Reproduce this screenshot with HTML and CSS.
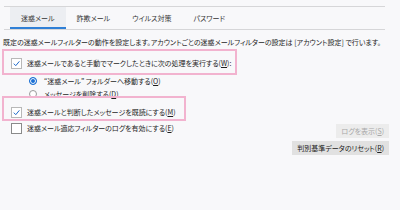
FILE: index.html
```html
<!DOCTYPE html>
<html lang="ja">

<head>
  <meta charset="UTF-8">
  <title>迷惑メール</title>
  <link rel="stylesheet" href="styles.css">
</head>

<body>
  <div class="panel">
    <div class="tabs">
      <div class="tab active">迷惑メール</div>
      <div class="tab">詐欺メール</div>
      <div class="tab">ウイルス対策</div>
      <div class="tab">パスワード</div>
    </div>

    <p class="desc">既定の迷惑メールフィルターの動作を設定します。アカウントごとの迷惑メールフィルターの設定は [アカウント設定] で行います。</p>

    <div class="row row-manual">
      <span class="check on"><svg viewBox="0 0 10 10"><path d="M2 5.2 L4.2 7.4 L8.2 2.6" /></svg></span>
      <span>迷惑メールであると手動でマークしたときに次の処理を実行する(<u>W</u>):</span>
    </div>
    <div class="row sub row-move">
      <span class="radio on"></span>
      <span>“迷惑メール” フォルダーへ移動する(<u>O</u>)</span>
    </div>
    <div class="row sub row-delete">
      <span class="radio"></span>
      <span>メッセージを削除する(<u>D</u>)</span>
    </div>
    <div class="row row-read">
      <span class="check on"><svg viewBox="0 0 10 10"><path d="M2 5.2 L4.2 7.4 L8.2 2.6" /></svg></span>
      <span>迷惑メールと判断したメッセージを既読にする(<u>M</u>)</span>
    </div>

    <div class="bottom">
      <div class="row">
        <span class="check"></span>
        <span>迷惑メール適応フィルターのログを有効にする(<u>E</u>)</span>
      </div>
      <div class="buttons">
        <button class="btn" disabled>ログを表示(<u>S</u>)</button>
        <button class="btn">判別基準データのリセット(<u>R</u>)</button>
      </div>
    </div>
  </div>

  <!-- 注釈の枠 -->
  <div class="mark mark-1"></div>
  <div class="mark mark-2"></div>
</body>

</html>
```

FILE: styles.css
```css
body {
  margin: 0;
  background: #f8f8fa;
  font-family: "Noto Sans CJK JP", "Noto Sans", sans-serif;
  font-size: 7px;
  font-feature-settings: "palt";
  color: #1e1e1e;
  position: relative;
  height: 210px;
  overflow: hidden;
}

.panel {
  padding: 6px 11px 0 3px;
}

.tabs {
  display: flex;
  height: 22px;
  margin: 0 4px 0 1px;
  padding-left: 6px;
  border-top: 1px solid #d6d6d8;
  border-bottom: 1px solid #d6d6d8;
}

.tab {
  padding: 0 11px;
  line-height: 22px;
  color: #333;
}

.tab.active {
  background: #eceef2;
  box-shadow: inset 0 -2px 0 #2f7fd6;
}

.desc {
  margin: 7px 0 0;
  line-height: 10px;
}

.row {
  display: flex;
  align-items: center;
  height: 12px;
  padding-left: 8px;
}

.row>span:last-child {
  margin-left: 5px;
}

.row-manual {
  margin-top: 10px;
}

.row-move {
  margin-top: 6px;
}

.row-delete {
  margin-top: 1px;
}

.row-read {
  margin-top: 6px;
}

.sub {
  padding-left: 26px;
}

.sub>span:last-child {
  margin-left: 7px;
}

.check {
  width: 9px;
  height: 9px;
  border: 1px solid #8a8a8a;
  background: #fff;
  display: flex;
}

.check.on {
  border-color: #b8b8b8;
}

.check svg {
  width: 9px;
  height: 9px;
}

.check path {
  fill: none;
  stroke: #1a67c9;
  stroke-width: 1.1;
}

.radio {
  width: 6px;
  height: 6px;
  border-radius: 50%;
  border: 1px solid #9a9a9a;
  background: #fff;
}

.radio.on {
  border-color: #1a6fd4;
  background: #1a6fd4;
  box-shadow: inset 0 0 0 1px #fff;
}

.bottom {
  display: flex;
  justify-content: space-between;
  align-items: flex-start;
  margin-top: 4px;
}

.buttons {
  display: flex;
  flex-direction: column;
  align-items: flex-end;
  gap: 3px;
  padding-top: 2px;
}

.btn {
  font: inherit;
  font-feature-settings: "palt";
  border: none;
  background: #e1e1e1;
  color: #222;
  height: 14px;
  padding: 0 5px;
}

.btn:disabled {
  background: #ececec;
  color: #a8a8a8;
}

.mark {
  position: absolute;
  border: 2.5px solid #f2b3cf;
}

.mark-1 {
  left: 2px;
  top: 49px;
  width: 231px;
  height: 22px;
}

.mark-2 {
  left: 2px;
  top: 96px;
  width: 180px;
  height: 21px;
}
```
